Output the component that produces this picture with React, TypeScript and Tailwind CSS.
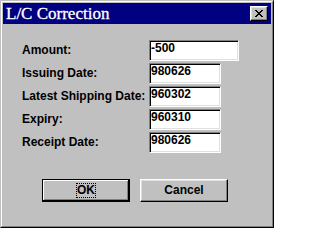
const fields = [
  { label: "Amount:", value: "-500", wide: true },
  { label: "Issuing Date:", value: "980626" },
  { label: "Latest Shipping Date:", value: "960302" },
  { label: "Expiry:", value: "960310" },
  { label: "Receipt Date:", value: "980626" },
]

function CloseGlyph() {
  return (
    <svg width="8" height="7" viewBox="0 0 8 7" shapeRendering="crispEdges">
      <path
        fill="#000"
        d="M0 0h2v1H0z M6 0h2v1H6z M1 1h2v1H1z M5 1h2v1H5z M2 2h4v1H2z M3 3h2v1H3z M2 4h4v1H2z M1 5h2v1H1z M5 5h2v1H5z M0 6h2v1H0z M6 6h2v1H6z"
      />
    </svg>
  )
}

export default function App() {
  return (
    <div className="w-[274px] h-[228px] border border-t-[#c0c0c0] border-l-[#c0c0c0] border-r-black border-b-black font-['Liberation_Sans',Arial,sans-serif] text-[12px] font-bold text-black">
      <div className="flex h-full flex-col border border-t-white border-l-white border-r-[#808080] border-b-[#808080] bg-[#c0c0c0] p-px">
        {/* Title bar */}
        <div className="flex h-[21px] shrink-0 items-center justify-between bg-[#000080] pl-[3px] pr-[3px]">
          <span className="font-['Liberation_Serif','Times_New_Roman',serif] text-[17px] font-normal leading-none text-white [-webkit-text-stroke:0.3px_white]">
            L/C Correction
          </span>
          <div className="flex h-[15px] w-[18px] items-center justify-center border border-t-white border-l-white border-r-black border-b-black bg-[#c0c0c0] shadow-[inset_-1px_-1px_0_#808080,inset_1px_1px_0_#dfdfdf]">
            <CloseGlyph />
          </div>
        </div>

        {/* Body */}
        <div className="flex-1 pl-[19px] pt-[16px]">
          <div className="grid grid-cols-[127px_auto] gap-y-[2px]">
            {fields.map((f) => (
              <div key={f.label} className="contents">
                <div className="flex h-[21px] items-center whitespace-nowrap leading-[13px]">
                  {f.label}
                </div>
                <div
                  className={
                    f.wide
                      ? "h-[21px] w-[90px] border border-t-[#808080] border-l-[#808080] border-r-white border-b-white bg-white pl-[1px] pt-[1px] leading-[13px] shadow-[inset_1px_1px_0_#000,inset_-1px_-1px_0_#dfdfdf]"
                      : "h-[21px] w-[72px] border border-t-[#808080] border-l-[#808080] border-r-white border-b-white bg-white pl-[1px] pt-[1px] leading-[13px] shadow-[inset_1px_1px_0_#000,inset_-1px_-1px_0_#dfdfdf]"
                  }
                >
                  {f.value}
                </div>
              </div>
            ))}
          </div>

          {/* Buttons */}
          <div className="ml-[20px] mt-[26px] flex gap-[10px]">
            <button className="flex h-[23px] w-[88px] items-center justify-center border border-black bg-[#c0c0c0] shadow-[inset_-1px_-1px_0_#000,inset_1px_1px_0_#fff,inset_-2px_-2px_0_#808080]">
              <span className="border border-dotted border-black leading-[13px]">OK</span>
            </button>
            <button className="flex h-[23px] w-[88px] items-center justify-center border border-t-white border-l-white border-r-black border-b-black bg-[#c0c0c0] leading-[13px] shadow-[inset_-1px_-1px_0_#808080,inset_1px_1px_0_#dfdfdf]">
              Cancel
            </button>
          </div>
        </div>
      </div>
    </div>
  )
}
